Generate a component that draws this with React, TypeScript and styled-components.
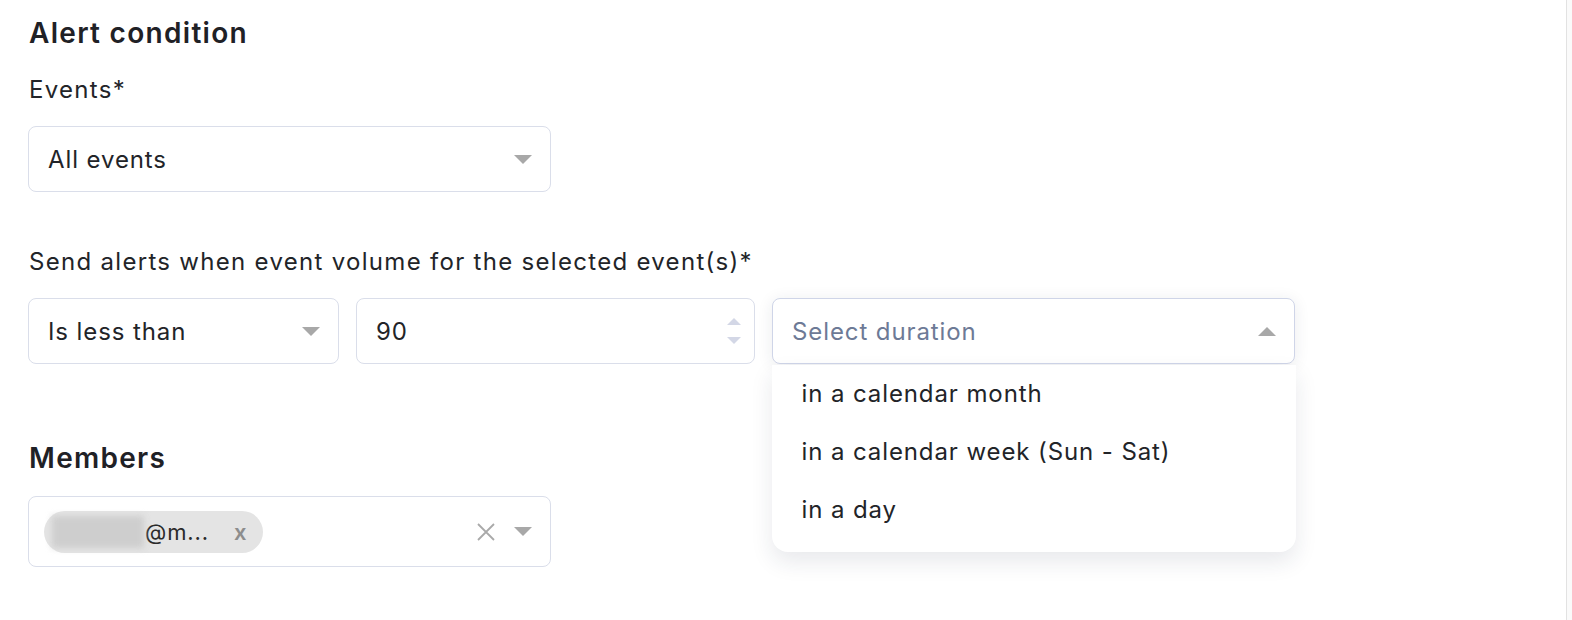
import styled, { createGlobalStyle } from "styled-components";

const GlobalStyle = createGlobalStyle`
  html, body {
    margin: 0;
    padding: 0;
    background: #ffffff;
  }
  body {
    font-family: Inter, "Noto Sans", sans-serif;
    color: #222428;
  }
`;

const Page = styled.div`
  display: flex;
  width: 1572px;
  height: 620px;
  overflow: hidden;
`;

const Main = styled.main`
  flex: 1;
  padding: 17px 0 0 28px;
  display: flex;
  flex-direction: column;
  align-items: flex-start;
`;

const Gutter = styled.div`
  width: 5px;
  border-left: 1px solid #e2e2e2;
  background: #fafafa;
`;

const Heading = styled.h2<{ $top?: number }>`
  margin: ${({ $top }) => $top ?? 0}px 0 0 1px;
  font-size: 28px;
  line-height: 32px;
  font-weight: 600;
  letter-spacing: 1.3px;
  color: #1f2126;
`;

const Label = styled.label<{ $top: number }>`
  margin: ${({ $top }) => $top}px 0 0 1px;
  font-size: 24px;
  line-height: 28px;
  letter-spacing: 1.3px;
  color: #222428;
`;

const Row = styled.div`
  display: flex;
  gap: 17px;
  margin-top: 22px;
`;

const Field = styled.div<{ $width: number; $height?: number; $open?: boolean; $top?: number }>`
  position: relative;
  box-sizing: border-box;
  width: ${({ $width }) => $width}px;
  height: ${({ $height }) => $height ?? 66}px;
  margin-top: ${({ $top }) => $top ?? 0}px;
  display: flex;
  align-items: center;
  gap: 12px;
  padding: 0 18px 0 19px;
  border: 1.5px solid ${({ $open }) => ($open ? "#cfd5e8" : "#dadeea")};
  border-radius: 8px;
  background: #fff;
  box-shadow: ${({ $open }) => ($open ? "0 2px 16px rgba(30, 40, 70, 0.09)" : "none")};
  font-size: 24px;
  letter-spacing: 0.9px;
`;

const Value = styled.span<{ $placeholder?: boolean }>`
  flex: 1;
  color: ${({ $placeholder }) => ($placeholder ? "#6d7a96" : "#222428")};
`;

const Caret = styled.span<{ $up?: boolean }>`
  width: 0;
  height: 0;
  border-left: 9px solid transparent;
  border-right: 9px solid transparent;
  ${({ $up }) =>
    $up ? "border-bottom: 9px solid #a8a8a8;" : "border-top: 9px solid #a8a8a8;"}
`;

const Spinner = styled.div`
  display: flex;
  flex-direction: column;
  gap: 12px;
  margin-right: -5px;
`;

const SpinArrow = styled.span<{ $up?: boolean }>`
  width: 0;
  height: 0;
  border-left: 7px solid transparent;
  border-right: 7px solid transparent;
  ${({ $up }) =>
    $up ? "border-bottom: 7px solid #d3d7e6;" : "border-top: 7px solid #d3d7e6;"}
`;

const Menu = styled.ul`
  position: absolute;
  top: calc(100% + 1.5px);
  left: -1.5px;
  right: -1.5px;
  margin: 0;
  padding: 0 0 13px;
  list-style: none;
  background: #fff;
  border-radius: 0 0 16px 16px;
  box-shadow: 0 10px 22px rgba(30, 40, 70, 0.10);
  z-index: 2;
`;

const MenuItem = styled.li`
  height: 58px;
  display: flex;
  align-items: center;
  padding-left: 30px;
  font-size: 24px;
  letter-spacing: 0.9px;
  color: #222428;
`;

const Chip = styled.div`
  display: flex;
  align-items: center;
  height: 42px;
  margin-left: -4px;
  padding: 0 16px 0 8px;
  border-radius: 21px;
  background: #e4e4e4;
  font-size: 22px;
  color: #2a2a2a;
`;

const Redacted = styled.span`
  width: 92px;
  height: 32px;
  margin-right: 1px;
  background: #cecece;
  filter: blur(3px);
`;

const ChipRemove = styled.span`
  margin-left: 25px;
  font-size: 22px;
  font-weight: 600;
  color: #8d8d8d;
`;

const Spacer = styled.span`
  flex: 1;
`;

const ClearIcon = () => (
  <svg width="20" height="20" viewBox="0 0 20 20" style={{ marginRight: 6 }}>
    <path d="M2 2 L18 18 M18 2 L2 18" stroke="#a9a9a9" strokeWidth="1.8" />
  </svg>
);

export default function App() {
  return (
    <>
      <GlobalStyle />
      <Page>
        <Main>
          <Heading>Alert condition</Heading>
          <Label $top={27}>Events*</Label>
          <Field $width={523} $top={22}>
            <Value>All events</Value>
            <Caret />
          </Field>

          <Label $top={56}>Send alerts when event volume for the selected event(s)*</Label>
          <Row>
            <Field $width={311}>
              <Value>Is less than</Value>
              <Caret />
            </Field>
            <Field $width={399}>
              <Value>90</Value>
              <Spinner>
                <SpinArrow $up />
                <SpinArrow />
              </Spinner>
            </Field>
            <Field $width={523} $open>
              <Value $placeholder>Select duration</Value>
              <Caret $up />
              <Menu>
                <MenuItem>in a calendar month</MenuItem>
                <MenuItem>in a calendar week (Sun - Sat)</MenuItem>
                <MenuItem>in a day</MenuItem>
              </Menu>
            </Field>
          </Row>

          <Heading $top={78}>Members</Heading>
          <Field $width={523} $height={71} $top={22}>
            <Chip>
              <Redacted />
              @m...
              <ChipRemove>x</ChipRemove>
            </Chip>
            <Spacer />
            <ClearIcon />
            <Caret />
          </Field>
        </Main>
        <Gutter />
      </Page>
    </>
  );
}
